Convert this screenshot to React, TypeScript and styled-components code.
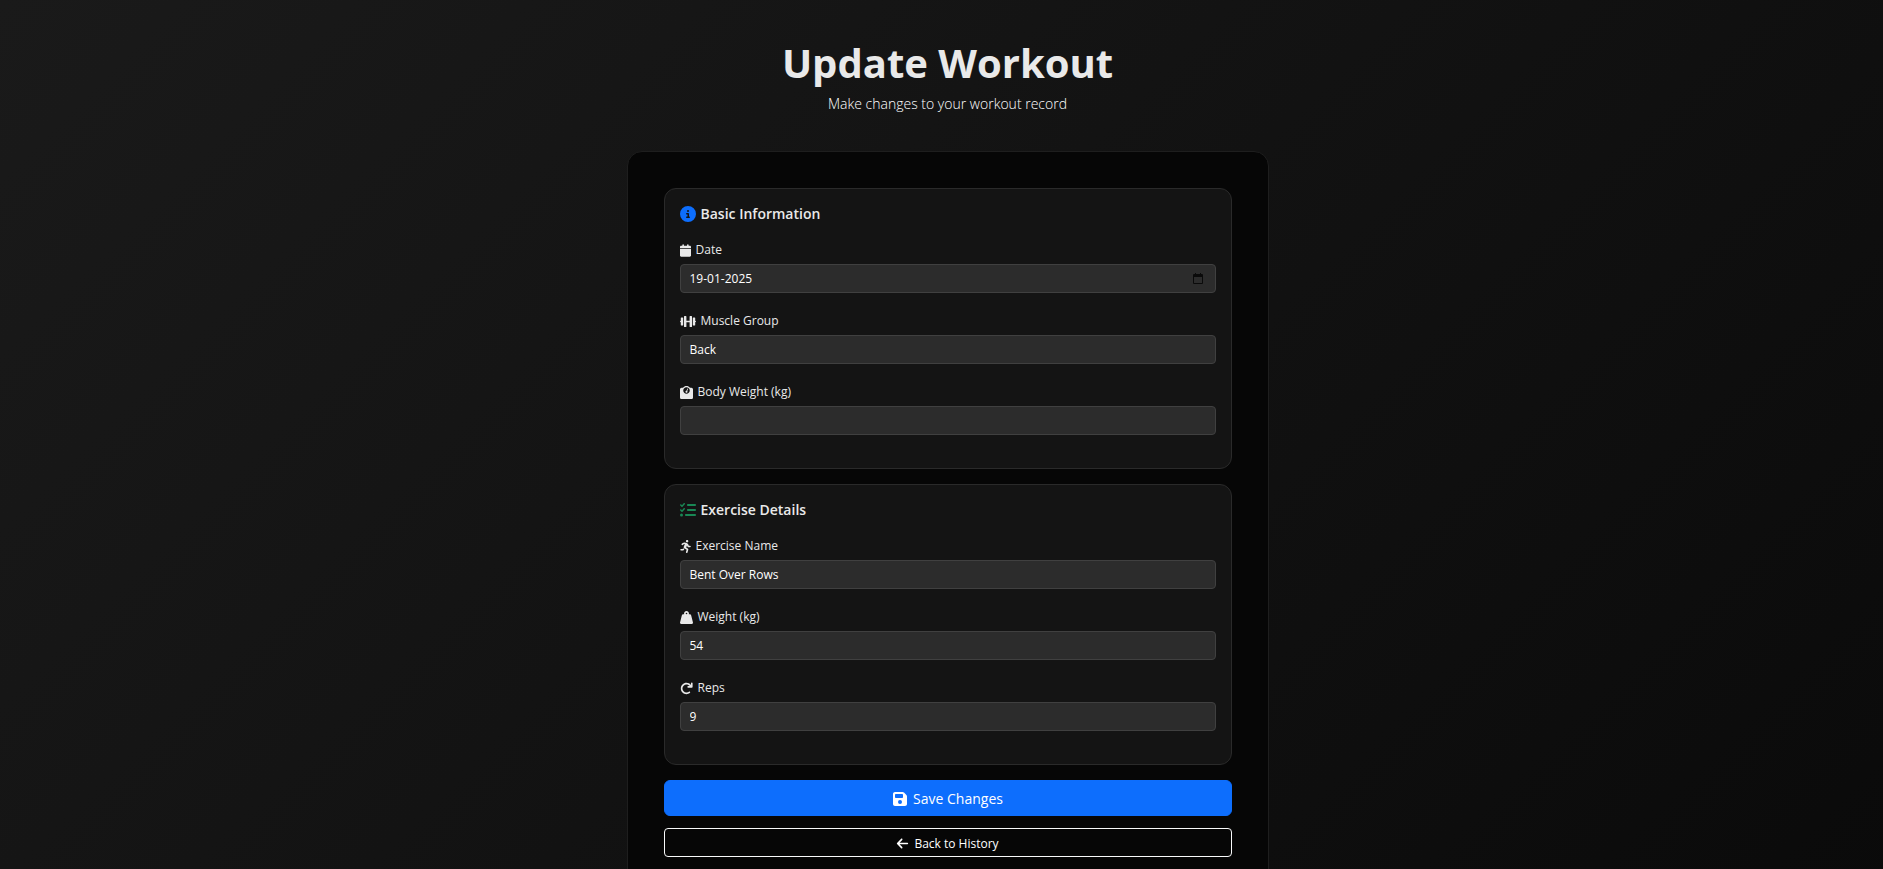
import React from "react";
import styled, { createGlobalStyle } from "styled-components";
import { FaRunning } from "react-icons/fa";
import {
  FaArrowLeft,
  FaCalendar,
  FaCircleInfo,
  FaFloppyDisk,
  FaListCheck,
  FaWeightHanging,
} from "react-icons/fa6";

const GlobalStyle = createGlobalStyle`
  *, *::before, *::after { box-sizing: border-box; }
  body {
    margin: 0;
    background: #0a0a0a;
    color: #e9e9e9;
    font-family: "Segoe UI", "Open Sans", "Noto Sans", sans-serif;
    font-size: 12px;
    line-height: 18px;
  }
`;

const Page = styled.main`
  min-height: 100vh;
  padding: 35px 0 36px 12px;
  background: linear-gradient(135deg, #1a1a1a 0%, #0a0a0a 100%);
`;

const Header = styled.header`
  margin-bottom: 35px;
  text-align: center;
`;

const Title = styled.h1`
  margin: 0;
  font-size: 40px;
  line-height: 55px;
  font-weight: 700;
`;

const Subtitle = styled.p`
  margin: 0;
  padding: 3px 0 1px;
  color: #fff;
  font-size: 14px;
  line-height: 22px;
  font-weight: 300;
`;

const Card = styled.form`
  display: flex;
  flex-direction: column;
  width: 100%;
  max-width: 642px;
  margin: 0 auto;
  padding: 36px;
  border: 1px solid #1e1e1e;
  border-radius: 15px;
  background: #060606;
`;

const Section = styled.section`
  margin-bottom: 15px;
  padding: 15px 15px 33px;
  border: 1px solid #2a2a2a;
  border-radius: 12px;
  background: #141414;
`;

const SectionTitle = styled.h2<{ $accent: string }>`
  display: flex;
  align-items: center;
  gap: 5px;
  margin: 0 0 17px;
  font-size: 14px;
  line-height: 20px;
  font-weight: 600;

  svg {
    color: ${(p) => p.$accent};
    font-size: 16px;
  }
`;

const Fields = styled.div`
  display: grid;
  gap: 19px;
`;

const FieldBox = styled.div`
  display: grid;
  gap: 5px;
`;

const Label = styled.label<{ $iconWidth: number }>`
  display: flex;
  align-items: center;
  gap: 5px;

  svg {
    flex: none;
    width: ${(p) => p.$iconWidth}px;
    height: 13px;
  }
`;

const Control = styled.div`
  display: flex;
  align-items: center;
  height: 29px;
  border: 1px solid #404040;
  border-radius: 4px;
  background: #2c2c2c;
`;

const Input = styled.input`
  flex: 1;
  min-width: 0;
  height: 100%;
  padding: 0 9px;
  border: 0;
  outline: 0;
  background: transparent;
  color: #fff;
  font: inherit;
`;

const PickerButton = styled.button`
  display: flex;
  margin-right: 12px;
  padding: 0;
  border: 0;
  background: none;
  color: #0a0a0a;
`;

const Button = styled.button<{ $primary?: boolean }>`
  display: flex;
  align-items: center;
  justify-content: center;
  gap: 5px;
  height: ${(p) => (p.$primary ? 36 : 29)}px;
  margin-bottom: ${(p) => (p.$primary ? 12 : 0)}px;
  padding: 2px 0 0;
  border: 1px solid ${(p) => (p.$primary ? "#0d6efd" : "#f8f9fa")};
  border-radius: ${(p) => (p.$primary ? 6 : 4)}px;
  background: ${(p) => (p.$primary ? "#0d6efd" : "transparent")};
  color: #fff;
  font: inherit;
  font-size: ${(p) => (p.$primary ? 14 : 12)}px;

  svg {
    font-size: ${(p) => (p.$primary ? 16 : 13)}px;
  }
`;

const DumbbellIcon = () => (
  <svg viewBox="0 0 640 512" fill="currentColor" aria-hidden="true">
    <path d="M104 96h-48C42.75 96 32 106.8 32 120V224C14.33 224 0 238.3 0 256c0 17.67 14.33 32 31.1 32L32 392C32 405.3 42.75 416 56 416h48C117.3 416 128 405.3 128 392v-272C128 106.8 117.3 96 104 96zM456 32h-48C394.8 32 384 42.75 384 56V224H256V56C256 42.75 245.3 32 232 32h-48C170.8 32 160 42.75 160 56v400C160 469.3 170.8 480 184 480h48C245.3 480 256 469.3 256 456V288h128v168c0 13.25 10.75 24 24 24h48c13.25 0 24-10.75 24-24V56C480 42.75 469.3 32 456 32zM608 224V120C608 106.8 597.3 96 584 96h-48C522.8 96 512 106.8 512 120v272c0 13.25 10.75 24 24 24h48c13.25 0 24-10.75 24-24V288c17.67 0 32-14.33 32-32S625.7 224 608 224z" />
  </svg>
);

const ScaleIcon = () => (
  <svg viewBox="0 0 512 512" fill="currentColor" aria-hidden="true">
    <path d="M310.3 97.25c-8-3.5-17.5 .25-21 8.5L255.8 184C233.8 184.3 216 202 216 224c0 22.12 17.88 40 40 40S296 246.1 296 224c0-10.5-4.25-20-11-27.12l33.75-78.63C322.3 110.1 318.4 100.8 310.3 97.25zM448 64h-56.23C359.5 24.91 310.7 0 256 0S152.5 24.91 120.2 64H64C28.75 64 0 92.75 0 128v320c0 35.25 28.75 64 64 64h384c35.25 0 64-28.75 64-64V128C512 92.75 483.3 64 448 64zM256 304c-70.58 0-128-57.42-128-128s57.42-128 128-128c70.58 0 128 57.42 128 128S326.6 304 256 304z" />
  </svg>
);

const RedoIcon = () => (
  <svg viewBox="0 0 512 512" fill="currentColor" aria-hidden="true">
    <path d="M496 48V192c0 17.69-14.31 32-32 32H320c-17.69 0-32-14.31-32-32s14.31-32 32-32h63.39c-29.97-39.7-77.25-63.78-127.6-63.78C167.7 96.22 96 167.9 96 256s71.69 159.8 159.8 159.8c34.88 0 68.03-11.03 95.88-31.94c14.22-10.53 34.22-7.75 44.81 6.375c10.59 14.16 7.75 34.22-6.375 44.81c-39.03 29.28-85.36 44.86-134.2 44.86C132.5 479.9 32 379.4 32 256s100.5-223.9 223.9-223.9c69.15 0 134 32.47 176.1 86.12V48c0-17.69 14.31-32 32-32S496 30.31 496 48z" />
  </svg>
);

type FieldProps = {
  id: string;
  label: string;
  value: string;
  icon: React.ReactNode;
  iconWidth?: number;
  children?: React.ReactNode;
};

function Field({ id, label, value, icon, iconWidth = 13, children }: FieldProps) {
  return (
    <FieldBox>
      <Label htmlFor={id} $iconWidth={iconWidth}>
        {icon}
        {label}
      </Label>
      <Control>
        <Input id={id} type="text" defaultValue={value} />
        {children}
      </Control>
    </FieldBox>
  );
}

export default function App() {
  return (
    <>
      <GlobalStyle />
      <Page>
        <Header>
          <Title>Update Workout</Title>
          <Subtitle>Make changes to your workout record</Subtitle>
        </Header>
        <Card onSubmit={(e) => e.preventDefault()}>
          <Section>
            <SectionTitle $accent="#0d6efd">
              <FaCircleInfo />
              Basic Information
            </SectionTitle>
            <Fields>
              <Field id="date" label="Date" value="19-01-2025" icon={<FaCalendar />} iconWidth={11}>
                <PickerButton type="button" aria-label="Choose date">
                  <svg width="10" height="11" viewBox="0 0 10 11" fill="currentColor">
                    <path d="M1 1h1V0h1v1h4V0h1v1h1a1 1 0 0 1 1 1v8a1 1 0 0 1-1 1H1a1 1 0 0 1-1-1V2a1 1 0 0 1 1-1zm0 3v6h8V4z" />
                  </svg>
                </PickerButton>
              </Field>
              <Field id="muscle" label="Muscle Group" value="Back" icon={<DumbbellIcon />} iconWidth={16} />
              <Field id="body" label="Body Weight (kg)" value="" icon={<ScaleIcon />} />
            </Fields>
          </Section>
          <Section>
            <SectionTitle $accent="#198754">
              <FaListCheck />
              Exercise Details
            </SectionTitle>
            <Fields>
              <Field
                id="exercise"
                label="Exercise Name"
                value="Bent Over Rows"
                icon={<FaRunning />}
                iconWidth={11}
              />
              <Field id="weight" label="Weight (kg)" value="54" icon={<FaWeightHanging />} />
              <Field id="reps" label="Reps" value="9" icon={<RedoIcon />} />
            </Fields>
          </Section>
          <Button $primary type="submit">
            <FaFloppyDisk />
            Save Changes
          </Button>
          <Button type="button">
            <FaArrowLeft />
            Back to History
          </Button>
        </Card>
      </Page>
    </>
  );
}
